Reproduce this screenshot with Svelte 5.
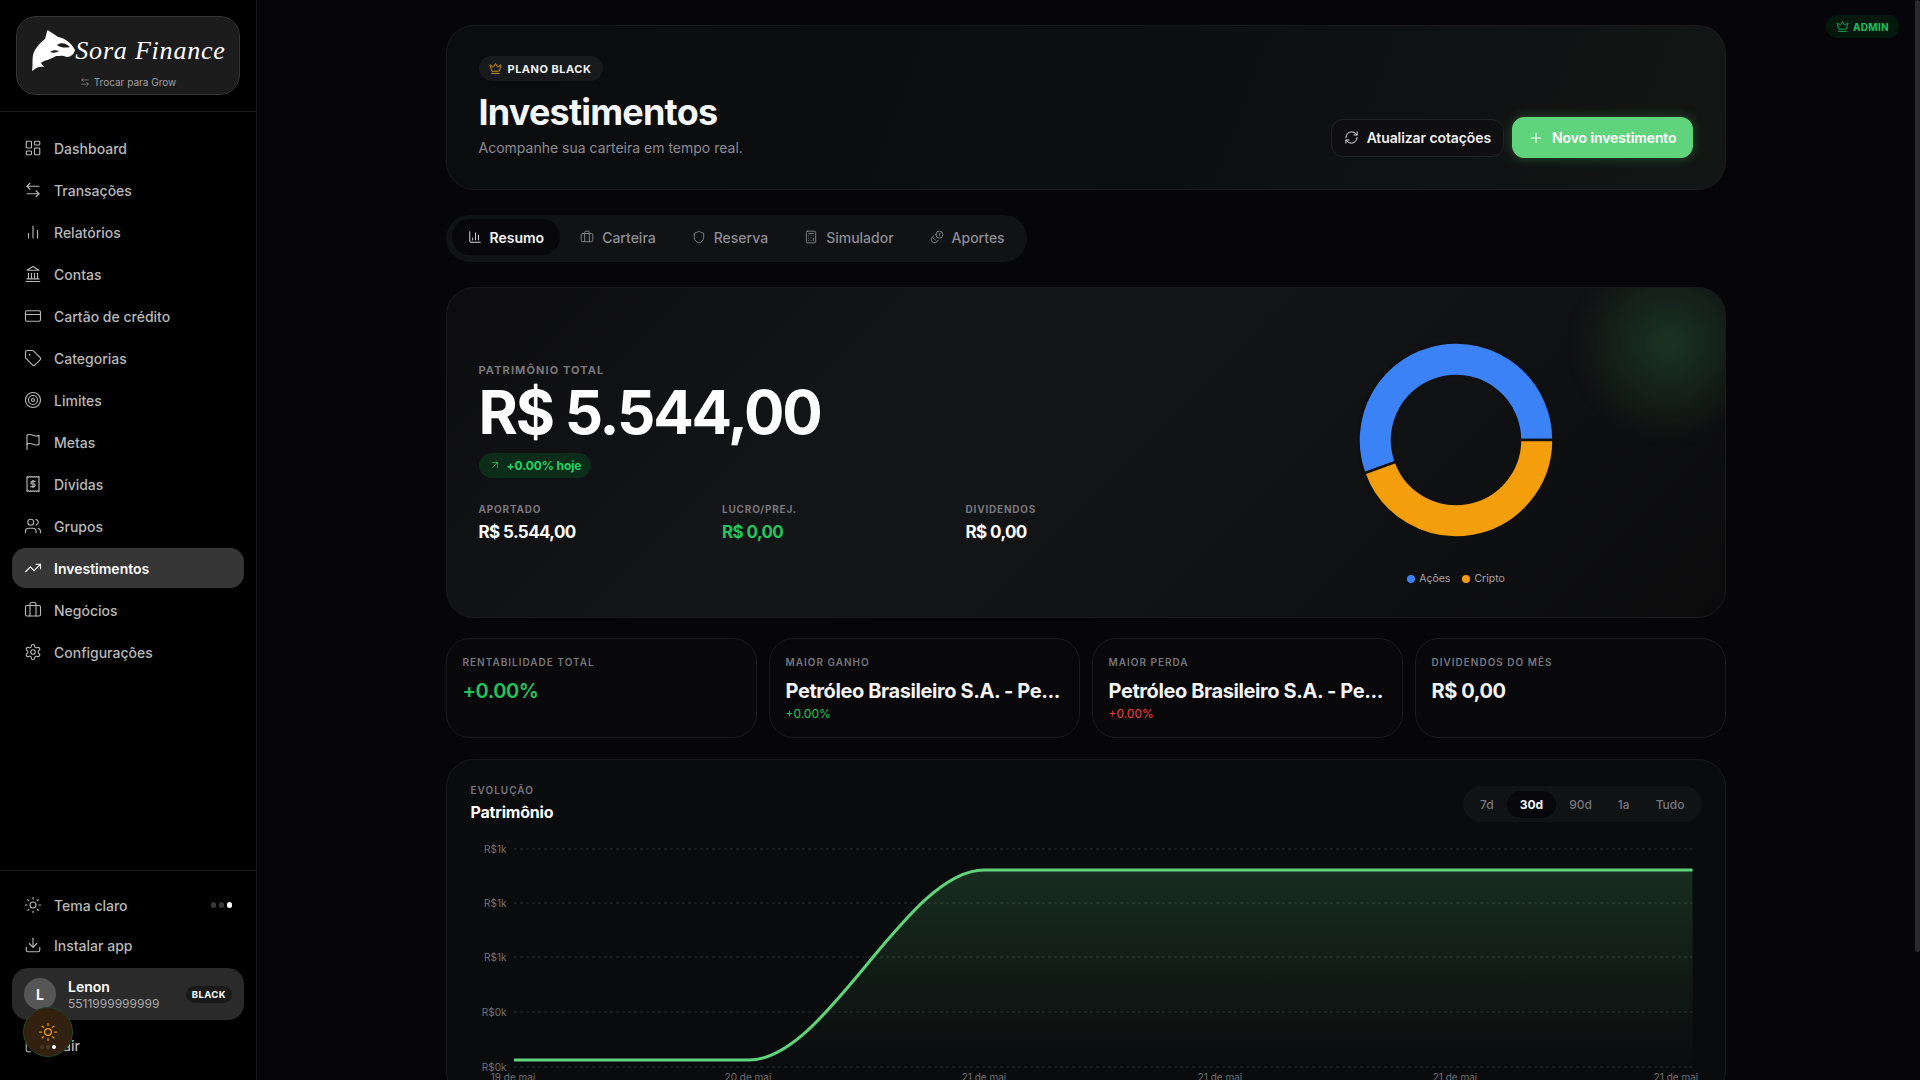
<script>
  const icons = {
    dashboard: '<rect x="3" y="3" width="7" height="9" rx="1"/><rect x="14" y="3" width="7" height="5" rx="1"/><rect x="14" y="12" width="7" height="9" rx="1"/><rect x="3" y="16" width="7" height="5" rx="1"/>',
    swap: '<path d="M8 3 4 7l4 4"/><path d="M4 7h16"/><path d="m16 21 4-4-4-4"/><path d="M20 17H4"/>',
    bars: '<path d="M18 20V10"/><path d="M12 20V4"/><path d="M6 20v-6"/>',
    bank: '<path d="M3 22h18"/><path d="M6 18v-7"/><path d="M10 18v-7"/><path d="M14 18v-7"/><path d="M18 18v-7"/><path d="M4 18.5h16"/><path d="M12 2l8 5H4z"/>',
    card: '<rect x="2" y="5" width="20" height="14" rx="2"/><path d="M2 10h20"/>',
    tag: '<path d="M12.586 2.586A2 2 0 0 0 11.172 2H4a2 2 0 0 0-2 2v7.172a2 2 0 0 0 .586 1.414l8.704 8.704a2.426 2.426 0 0 0 3.42 0l6.58-6.58a2.426 2.426 0 0 0 0-3.42z"/><circle cx="7.5" cy="7.5" r=".5"/>',
    target: '<circle cx="12" cy="12" r="10"/><circle cx="12" cy="12" r="6"/><circle cx="12" cy="12" r="2"/>',
    flag: '<path d="M4 15s1-1 4-1 5 2 8 2 4-1 4-1V3s-1 1-4 1-5-2-8-2-4 1-4 1z"/><path d="M4 22v-7"/>',
    receipt: '<path d="M4 2l1.6 1L7.2 2l1.6 1 1.6-1L12 3l1.6-1 1.6 1 1.6-1 1.6 1L20 2v20l-1.6-1-1.6 1-1.6-1-1.6 1L12 21l-1.6 1-1.6-1-1.6 1-1.6-1L4 22z"/><path d="M15 8.5h-4a1.75 1.75 0 0 0 0 3.5h2a1.75 1.75 0 0 1 0 3.5H9"/><path d="M12 7v10"/>',
    users: '<path d="M16 21v-2a4 4 0 0 0-4-4H6a4 4 0 0 0-4 4v2"/><circle cx="9" cy="7" r="4"/><path d="M22 21v-2a4 4 0 0 0-3-3.87"/><path d="M16 3.13a4 4 0 0 1 0 7.75"/>',
    trend: '<path d="M22 7 13.5 15.5 8.5 10.5 2 17"/><path d="M16 7h6v6"/>',
    briefcase: '<path d="M16 20V4a2 2 0 0 0-2-2h-4a2 2 0 0 0-2 2v16"/><rect x="2" y="6" width="20" height="14" rx="2"/>',
    gear: '<path d="M12.22 2h-.44a2 2 0 0 0-2 2v.18a2 2 0 0 1-1 1.73l-.43.25a2 2 0 0 1-2 0l-.15-.08a2 2 0 0 0-2.73.73l-.22.38a2 2 0 0 0 .73 2.73l.15.1a2 2 0 0 1 1 1.72v.51a2 2 0 0 1-1 1.74l-.15.09a2 2 0 0 0-.73 2.73l.22.38a2 2 0 0 0 2.73.73l.15-.08a2 2 0 0 1 2 0l.43.25a2 2 0 0 1 1 1.73V20a2 2 0 0 0 2 2h.44a2 2 0 0 0 2-2v-.18a2 2 0 0 1 1-1.73l.43-.25a2 2 0 0 1 2 0l.15.08a2 2 0 0 0 2.73-.73l.22-.39a2 2 0 0 0-.73-2.73l-.15-.08a2 2 0 0 1-1-1.74v-.5a2 2 0 0 1 1-1.74l.15-.09a2 2 0 0 0 .73-2.73l-.22-.38a2 2 0 0 0-2.73-.73l-.15.08a2 2 0 0 1-2 0l-.43-.25a2 2 0 0 1-1-1.73V4a2 2 0 0 0-2-2z"/><circle cx="12" cy="12" r="3"/>',
    sun: '<circle cx="12" cy="12" r="4"/><path d="M12 2v2"/><path d="M12 20v2"/><path d="m4.93 4.93 1.41 1.41"/><path d="m17.66 17.66 1.41 1.41"/><path d="M2 12h2"/><path d="M20 12h2"/><path d="m6.34 17.66-1.41 1.41"/><path d="m19.07 4.93-1.41 1.41"/>',
    download: '<path d="M21 15v4a2 2 0 0 1-2 2H5a2 2 0 0 1-2-2v-4"/><path d="m7 10 5 5 5-5"/><path d="M12 15V3"/>',
    logout: '<path d="M9 21H5a2 2 0 0 1-2-2V5a2 2 0 0 1 2-2h4"/><path d="m16 17 5-5-5-5"/><path d="M21 12H9"/>',
    crown: '<path d="M11.562 3.266a.5.5 0 0 1 .876 0L15.39 8.87a1 1 0 0 0 1.516.294L21.183 5.5a.5.5 0 0 1 .798.519l-2.834 10.246a1 1 0 0 1-.956.734H5.81a1 1 0 0 1-.957-.734L2.02 6.02a.5.5 0 0 1 .798-.519l4.276 3.664a1 1 0 0 0 1.516-.294z"/><path d="M5 21h14"/>',
    refresh: '<path d="M3 12a9 9 0 0 1 9-9 9.75 9.75 0 0 1 6.74 2.74L21 8"/><path d="M21 3v5h-5"/><path d="M21 12a9 9 0 0 1-9 9 9.75 9.75 0 0 1-6.74-2.74L3 16"/><path d="M8 16H3v5"/>',
    plus: '<path d="M5 12h14"/><path d="M12 5v14"/>',
    column: '<path d="M3 3v16a2 2 0 0 0 2 2h16"/><path d="M18 17V9"/><path d="M13 17V5"/><path d="M8 17v-3"/>',
    shield: '<path d="M20 13c0 5-3.5 7.5-7.66 8.95a1 1 0 0 1-.67-.01C7.5 20.5 4 18 4 13V6a1 1 0 0 1 1-1c2 0 4.5-1.2 6.24-2.72a1.17 1.17 0 0 1 1.52 0C14.51 3.81 17 5 19 5a1 1 0 0 1 1 1z"/>',
    calc: '<rect x="4" y="2" width="16" height="20" rx="2"/><path d="M8 6h8"/><path d="M16 14v4"/><path d="M16 10h.01"/><path d="M12 10h.01"/><path d="M8 10h.01"/><path d="M12 14h.01"/><path d="M8 14h.01"/><path d="M12 18h.01"/><path d="M8 18h.01"/>',
    coins: '<g transform="matrix(-1 0 0 1 24 0)"><circle cx="8" cy="8" r="6"/><path d="M18.09 10.37A6 6 0 1 1 10.34 18"/><path d="M7 6h1v4"/><path d="m16.71 13.88.7.71-2.82 2.82"/></g>',
    upright: '<path d="M7 7h10v10"/><path d="M7 17 17 7"/>'
  };

  const nav = [
    ['dashboard', 'Dashboard'], ['swap', 'Transações'], ['bars', 'Relatórios'], ['bank', 'Contas'],
    ['card', 'Cartão de crédito'], ['tag', 'Categorias'], ['target', 'Limites'], ['flag', 'Metas'],
    ['receipt', 'Dívidas'], ['users', 'Grupos'], ['trend', 'Investimentos'], ['briefcase', 'Negócios'],
    ['gear', 'Configurações']
  ];

  const tabs = [['column', 'Resumo'], ['briefcase', 'Carteira'], ['shield', 'Reserva'], ['calc', 'Simulador'], ['coins', 'Aportes']];
  const ranges = ['7d', '30d', '90d', '1a', 'Tudo'];

  const stats = [
    { label: 'RENTABILIDADE TOTAL', value: '+0.00%', cls: 'light' },
    { label: 'MAIOR GANHO', value: 'Petróleo Brasileiro S.A. - Pe...', sub: '+0.00%', subCls: 'green' },
    { label: 'MAIOR PERDA', value: 'Petróleo Brasileiro S.A. - Pe...', sub: '+0.00%', subCls: 'red' },
    { label: 'DIVIDENDOS DO MÊS', value: 'R$ 0,00' }
  ];

  // donut, angles in degrees clockwise from 3 o'clock
  function arc(a0, a1, cx = 120, cy = 120, R = 97.5, r = 64) {
    const p = (rad, a) => {
      const t = (a * Math.PI) / 180;
      return `${(cx + rad * Math.cos(t)).toFixed(2)} ${(cy + rad * Math.sin(t)).toFixed(2)}`;
    };
    const big = Math.abs(a1 - a0) > 180 ? 1 : 0;
    return `M${p(R, a0)}A${R} ${R} 0 ${big} 1 ${p(R, a1)}L${p(r, a1)}A${r} ${r} 0 ${big} 0 ${p(r, a0)}Z`;
  }

  // chart geometry, coordinates inside the svg
  const gridY = [9, 63, 117, 172, 227];
  const yLabels = ['R$1k', 'R$1k', 'R$1k', 'R$0k', 'R$0k'];
  const xLabels = [[42, '19 de mai'], [277, '20 de mai'], [513, '21 de mai'], [749, '21 de mai'], [984, '21 de mai'], [1205, '21 de mai']];
  const x0 = 43, x1 = 278, x2 = 513, x3 = 1221.5, yLow = 220, yHigh = 30;
  const line = `M${x0} ${yLow}L${x1} ${yLow}C${x1 + 78} ${yLow} ${x2 - 78} ${yHigh} ${x2} ${yHigh}L${x3} ${yHigh}`;
  const area = `${line}L${x3} 227L${x0} 227Z`;
</script>

<div class="app">
  <aside class="sidebar">
    <div class="brand">
      <div class="logo">
        <div class="logo-row">
          <svg class="orca" width="46" height="42" viewBox="0 0 46 42">
            <path fill="#fff" d="M2 41C3 36 2 30 3 25 5 18 10 13 15 9L17.500 0C21 2 25 5 28 7 34 8 41 12 45 20 44 24 41 27 37 27 32 25 30 26 26 26 20 30 14 30 11 33L14 37C10 36 7 37 2 41Z"/>
            <path fill="#1c1c1c" d="M27 15C31 12 36 13 40 17 36 18 31 18 27 15ZM20 22C23 20 26 20 29 21 26 23 23 23 20 22Z"/>
          </svg>
          <span class="logo-name">Sora Finance</span>
        </div>
        <div class="logo-switch">
          <svg class="ico" width="10" height="10" viewBox="0 0 24 24">{@html icons.swap}</svg>
          Trocar para Grow
        </div>
      </div>
    </div>

    <nav class="nav">
      {#each nav as [icon, label]}
        <div class="nav-item" class:active={label === 'Investimentos'}>
          <svg class="ico" width="18" height="18" viewBox="0 0 24 24">{@html icons[icon]}</svg>
          <span>{label}</span>
        </div>
      {/each}
    </nav>

    <div class="side-foot">
      <div class="nav-item">
        <svg class="ico" width="18" height="18" viewBox="0 0 24 24">{@html icons.sun}</svg>
        <span>Tema claro</span>
        <div class="dots"><i></i><i></i><i class="on"></i></div>
      </div>
      <div class="nav-item">
        <svg class="ico" width="18" height="18" viewBox="0 0 24 24">{@html icons.download}</svg>
        <span>Instalar app</span>
      </div>
      <div class="user">
        <div class="avatar">L</div>
        <div class="user-info">
          <strong>Lenon</strong>
          <small>5511999999999</small>
        </div>
        <span class="user-plan">BLACK</span>
      </div>
      <div class="nav-item logout">
        <svg class="ico" width="18" height="18" viewBox="0 0 24 24">{@html icons.logout}</svg>
        <span>Sair</span>
      </div>
    </div>

    <div class="theme-fab">
      <svg class="ico" width="20" height="20" viewBox="0 0 24 24">{@html icons.sun}</svg>
      <div class="fab-dots"><i></i><i></i><i class="on"></i></div>
    </div>
  </aside>

  <main class="main">
    <div class="content">
      <header class="head card">
        <div>
          <div class="plan">
            <svg class="ico" width="13" height="13" viewBox="0 0 24 24">{@html icons.crown}</svg>
            PLANO BLACK
          </div>
          <h1>Investimentos</h1>
          <p>Acompanhe sua carteira em tempo real.</p>
        </div>
        <div class="actions">
          <button class="btn">
            <svg class="ico" width="15" height="15" viewBox="0 0 24 24">{@html icons.refresh}</svg>
            Atualizar cotações
          </button>
          <button class="btn primary">
            <svg class="ico" width="16" height="16" viewBox="0 0 24 24">{@html icons.plus}</svg>
            Novo investimento
          </button>
        </div>
      </header>

      <div class="tabs">
        {#each tabs as [icon, label]}
          <div class="tab" class:active={label === 'Resumo'}>
            <svg class="ico" width="14" height="14" viewBox="0 0 24 24">{@html icons[icon]}</svg>
            {label}
          </div>
        {/each}
      </div>

      <section class="hero card">
        <div class="glow"></div>
        <div class="hero-left">
          <div class="eyebrow big">PATRIMÔNIO TOTAL</div>
          <div class="total">R$ 5.544,00</div>
          <div class="today">
            <svg class="ico" width="12" height="12" viewBox="0 0 24 24">{@html icons.upright}</svg>
            +0.00% hoje
          </div>
          <div class="hero-stats">
            <div><div class="eyebrow">APORTADO</div><div class="hero-val">R$ 5.544,00</div></div>
            <div><div class="eyebrow">LUCRO/PREJ.</div><div class="hero-val green">R$ 0,00</div></div>
            <div><div class="eyebrow">DIVIDENDOS</div><div class="hero-val">R$ 0,00</div></div>
          </div>
        </div>
        <div class="hero-right">
          <svg width="240" height="240" viewBox="0 0 240 240">
            <path d={arc(160, 360)} fill="#3b82f6" stroke="#0f1011" stroke-width="2.5" />
            <path d={arc(0, 160)} fill="#f59e0b" stroke="#0f1011" stroke-width="2.5" />
          </svg>
          <div class="legend">
            <span><i class="blue"></i>Ações</span>
            <span><i class="orange"></i>Cripto</span>
          </div>
        </div>
      </section>

      <div class="stats">
        {#each stats as s}
          <div class="stat card">
            <div class="eyebrow small">{s.label}</div>
            <div class="stat-val {s.cls ?? ''}">{s.value}</div>
            {#if s.sub}<div class="stat-sub {s.subCls}">{s.sub}</div>{/if}
          </div>
        {/each}
      </div>

      <section class="chart card">
        <div class="chart-head">
          <div>
            <div class="eyebrow small">EVOLUÇÃO</div>
            <h2>Patrimônio</h2>
          </div>
          <div class="ranges">
            {#each ranges as r}
              <span class:active={r === '30d'}>{r}</span>
            {/each}
          </div>
        </div>
        <svg class="plot" width="1229" height="300" viewBox="0 0 1229 300">
          <defs>
            <linearGradient id="fill" x1="0" y1="0" x2="0" y2="1">
              <stop offset="0" stop-color="#5fd47d" stop-opacity=".17" />
              <stop offset="1" stop-color="#5fd47d" stop-opacity="0" />
            </linearGradient>
          </defs>
          {#each gridY as y, i}
            <line x1="43" x2="1221.500" y1={y} y2={y} stroke="#2a2b2d" stroke-dasharray="3 3" />
            <text x="35.500" y={y + 4} text-anchor="end">{yLabels[i]}</text>
          {/each}
          <path d={area} fill="url(#fill)" />
          <path d={line} fill="none" stroke="#5fd47d" stroke-width="3" />
          {#each xLabels as [x, t]}
            <text {x} y="241" text-anchor="middle">{t}</text>
          {/each}
        </svg>
      </section>
    </div>
  </main>

  <div class="admin">
    <svg class="ico" width="13" height="13" viewBox="0 0 24 24">{@html icons.crown}</svg>
    ADMIN
  </div>
  <div class="scroll-thumb"></div>
</div>

<style>
  :global(body) {
    margin: 0;
    background: #060608;
    overflow: hidden;
  }

  .app {
    display: flex;
    height: 1080px;
    overflow: hidden;
    font-family: Inter, 'Liberation Sans', sans-serif;
    color: #fff;
    background: #060608;
  }

  .ico {
    fill: none;
    stroke: currentColor;
    stroke-width: 1.5;
    stroke-linecap: round;
    stroke-linejoin: round;
    flex-shrink: 0;
  }

  /* sidebar */
  .sidebar {
    position: relative;
    width: 256px;
    flex-shrink: 0;
    display: flex;
    flex-direction: column;
    background: #000;
    border-right: 1px solid #17171a;
  }

  .brand {
    padding: 16px 16px;
    border-bottom: 1px solid #1c1c1e;
  }

  .logo {
    height: 79px;
    box-sizing: border-box;
    border: 1px solid #333;
    border-radius: 20px;
    background: #1c1c1c;
    display: flex;
    flex-direction: column;
    align-items: center;
  }

  .logo-row {
    display: flex;
    align-items: center;
    margin-top: 13px;
    height: 42px;
  }

  .logo-name {
    font-family: 'Liberation Serif', serif;
    font-style: italic;
    font-size: 26px;
    letter-spacing: .8px;
    line-height: 1;
    white-space: nowrap;
    margin-left: -1px;
  }

  .logo-switch {
    display: flex;
    align-items: center;
    gap: 4px;
    font-size: 10px;
    color: #a0a0a0;
    margin-top: 4px;
  }

  .nav {
    flex: 1;
    display: flex;
    flex-direction: column;
    gap: 2px;
    padding: 16px 12px;
  }

  .nav-item {
    display: flex;
    align-items: center;
    gap: 12px;
    height: 40px;
    flex-shrink: 0;
    padding: 0 12px;
    border-radius: 14px;
    font-size: 14px;
    font-weight: 500;
    color: #b8b8b8;
  }

  .nav-item.active {
    background: #363636;
    color: #fff;
    font-weight: 600;
  }

  .side-foot {
    padding: 14px 12px 15px;
    border-top: 1px solid #1c1c1e;
  }

  .dots {
    margin-left: auto;
    display: flex;
    gap: 2.500px;
  }

  .dots i, .fab-dots i {
    width: 5.500px;
    height: 5.500px;
    border-radius: 50%;
    background: #3a3a3a;
  }

  .dots i.on, .fab-dots i.on {
    background: #fff;
  }

  .user {
    display: flex;
    align-items: center;
    gap: 12px;
    height: 52px;
    box-sizing: border-box;
    margin-top: 3px;
    padding: 0 12px;
    border-radius: 16px;
    background: #2a2a2a;
  }

  .avatar {
    width: 32px;
    height: 32px;
    border-radius: 50%;
    background: #565656;
    display: flex;
    align-items: center;
    justify-content: center;
    font-size: 14px;
    font-weight: 700;
  }

  .user-info {
    flex: 1;
    display: flex;
    flex-direction: column;
    line-height: 17px;
    padding-top: 1px;
  }

  .user-info strong {
    font-size: 14px;
    font-weight: 600;
  }

  .user-info small {
    font-size: 12px;
    color: #a8a8a8;
  }

  .user-plan {
    font-size: 9.500px;
    font-weight: 700;
    letter-spacing: .4px;
    padding: 3px 6px;
    border-radius: 10px;
    background: #191919;
  }

  .logout {
    margin-top: 5px;
  }

  .theme-fab {
    position: absolute;
    left: 23px;
    top: 1007px;
    width: 50px;
    height: 50px;
    box-sizing: border-box;
    border-radius: 50%;
    border: 1px solid #21442a;
    background: #33210f;
    color: #f59e0b;
    display: flex;
    flex-direction: column;
    align-items: center;
    padding-top: 14px;
  }

  .fab-dots {
    display: flex;
    gap: 2px;
    margin-top: 3px;
  }

  .fab-dots i {
    width: 4px;
    height: 4px;
    background: #4a3a28;
  }

  /* main */
  .main {
    flex: 1;
    min-width: 0;
    padding: 25px 6px 0 0;
  }

  .content {
    width: 1280px;
    margin: 0 auto;
  }

  .card {
    box-sizing: border-box;
    border: 1px solid #19191c;
  }

  .head {
    display: flex;
    justify-content: space-between;
    align-items: flex-end;
    height: 165px;
    padding: 30px 32px 31px;
    border-radius: 28px;
    background: linear-gradient(110deg, #0b0c0e 0%, #0d0e10 55%, #121614 100%);
  }

  .plan {
    display: inline-flex;
    align-items: center;
    gap: 6px;
    height: 25px;
    padding: 0 12px 0 10px;
    border-radius: 13px;
    background: #18191b;
    font-size: 11px;
    font-weight: 700;
    letter-spacing: .5px;
    color: #f2f2f2;
  }

  .plan .ico {
    color: #eab308;
  }

  h1 {
    margin: 11px 0 0;
    font-size: 36px;
    line-height: 40px;
    font-weight: 700;
    letter-spacing: -.8px;
    color: #f4f6fa;
  }

  .head p {
    margin: 6px 0 0;
    font-size: 14px;
    line-height: 20px;
    color: #8a8a92;
  }

  .actions {
    display: flex;
    align-items: center;
    gap: 8px;
  }

  .btn {
    display: flex;
    align-items: center;
    gap: 8px;
    height: 38px;
    padding: 0 12px;
    box-sizing: border-box;
    font-family: inherit;
    font-size: 14px;
    font-weight: 600;
    color: #f0f0f2;
    background: #0f0f12;
    border: 1px solid #222226;
    border-radius: 12px;
    letter-spacing: -.1px;
  }

  .btn.primary {
    height: 41px;
    padding: 0 15px;
    color: #fff;
    background: #5fd47d;
    border-color: #5fd47d;
    box-shadow: 0 0 12px rgba(95, 212, 125, .3);
  }

  .tabs {
    display: inline-flex;
    gap: 4px;
    margin-top: 25px;
    padding: 4px 6px;
    height: 47px;
    box-sizing: border-box;
    border-radius: 24px;
    background: #111214;
  }

  .tab {
    display: flex;
    align-items: center;
    gap: 8px;
    height: 36px;
    padding: 0 16px;
    border-radius: 18px;
    font-size: 14px;
    font-weight: 500;
    color: #8c8c94;
  }

  .tab.active {
    background: #08080a;
    color: #f4f4f6;
    font-weight: 600;
  }

  .hero {
    position: relative;
    overflow: hidden;
    display: flex;
    align-items: center;
    height: 331px;
    margin-top: 25px;
    padding: 0 32px;
    border-radius: 28px;
    background: linear-gradient(135deg, #0d0d0f 0%, #141517 35%, #121315 60%, #0b0b0c 100%);
  }

  .glow {
    position: absolute;
    right: -45px;
    top: -44px;
    width: 200px;
    height: 200px;
    border-radius: 50%;
    background: radial-gradient(circle, rgba(60, 150, 85, .28) 0%, rgba(60, 150, 85, 0) 70%);
    filter: blur(6px);
  }

  .hero-left {
    width: 732px;
    flex-shrink: 0;
  }

  .eyebrow {
    font-size: 10px;
    line-height: 14px;
    font-weight: 700;
    letter-spacing: .8px;
    color: #77777c;
  }

  .eyebrow.big {
    font-size: 11px;
    letter-spacing: 1.1px;
  }

  .eyebrow.small {
    font-size: 10px;
    letter-spacing: 1px;
    font-weight: 600;
    color: #76767e;
  }

  .total {
    margin-top: 5px;
    font-size: 60px;
    line-height: 60px;
    font-weight: 700;
    letter-spacing: -2.200px;
    color: #fff;
  }

  .today {
    display: inline-flex;
    align-items: center;
    gap: 6px;
    height: 25px;
    margin-top: 11px;
    padding: 0 10px;
    border-radius: 13px;
    background: #0c2c1a;
    font-size: 12px;
    font-weight: 700;
    letter-spacing: -.1px;
    color: #22d365;
  }

  .hero-stats {
    display: grid;
    grid-template-columns: repeat(3, 243.500px);
    margin-top: 24px;
  }

  .hero-val {
    margin-top: 5px;
    font-size: 17px;
    line-height: 22px;
    font-weight: 700;
    letter-spacing: -.6px;
  }

  .green {
    color: #22c55e;
  }

  .red {
    color: #ef4444;
  }

  .hero-right {
    flex: 1;
    margin-left: 9px;
    display: flex;
    flex-direction: column;
    align-items: center;
  }

  .hero-right svg {
    display: block;
  }

  .legend {
    display: flex;
    gap: 12px;
    margin-top: 12px;
    font-size: 10.500px;
    line-height: 14px;
    color: #a3a3a8;
  }

  .legend span {
    display: flex;
    align-items: center;
    gap: 4px;
  }

  .legend i {
    width: 8px;
    height: 8px;
    border-radius: 50%;
  }

  .blue { background: #3b82f6; }
  .orange { background: #f59e0b; }

  .stats {
    display: grid;
    grid-template-columns: repeat(4, 1fr);
    gap: 12px;
    margin-top: 20px;
  }

  .stat {
    height: 100px;
    padding: 16px 16px;
    border-radius: 24px;
    background: #08080a;
    min-width: 0;
  }

  .stat-val {
    margin-top: 8px;
    font-size: 20px;
    line-height: 28px;
    font-weight: 700;
    letter-spacing: -.4px;
    color: #f4f4f6;
    white-space: nowrap;
  }

  .stat-val.light {
    font-weight: 600;
    color: #22c55e;
  }

  .stat-sub {
    font-size: 12px;
    line-height: 16px;
    margin-top: 1px;
  }

  .chart {
    height: 340px;
    margin-top: 21px;
    padding: 23px 24px;
    border-radius: 28px;
    background: #0a0b0d;
  }

  .chart-head {
    display: flex;
    justify-content: space-between;
    align-items: flex-start;
  }

  h2 {
    margin: 4px 0 0;
    font-size: 16px;
    line-height: 22px;
    font-weight: 700;
    letter-spacing: -.2px;
  }

  .ranges {
    display: flex;
    align-items: center;
    height: 36px;
    margin: 3px -1px 0 0;
    padding: 0 4px;
    border-radius: 18px;
    background: #111214;
    font-size: 12px;
    font-weight: 500;
    color: #77777f;
  }

  .ranges span {
    display: flex;
    align-items: center;
    height: 27px;
    padding: 0 13px;
    border-radius: 14px;
  }

  .ranges span.active {
    background: #08080a;
    color: #f4f4f6;
    font-weight: 700;
  }

  .plot {
    display: block;
    margin-top: 17px;
  }

  .plot text {
    font-family: Inter, 'Liberation Sans', sans-serif;
    font-size: 10px;
    fill: #717176;
  }

  .admin {
    position: absolute;
    top: 15px;
    left: 1826px;
    display: flex;
    align-items: center;
    gap: 4px;
    height: 23px;
    padding: 0 10px;
    border-radius: 12px;
    background: #04180e;
    color: #16c060;
    font-size: 10px;
    font-weight: 700;
    letter-spacing: .3px;
  }

  .scroll-thumb {
    position: absolute;
    top: 0;
    right: 0;
    width: 5px;
    height: 952px;
    border-radius: 3px;
    background: #2a2a2c;
  }
</style>
